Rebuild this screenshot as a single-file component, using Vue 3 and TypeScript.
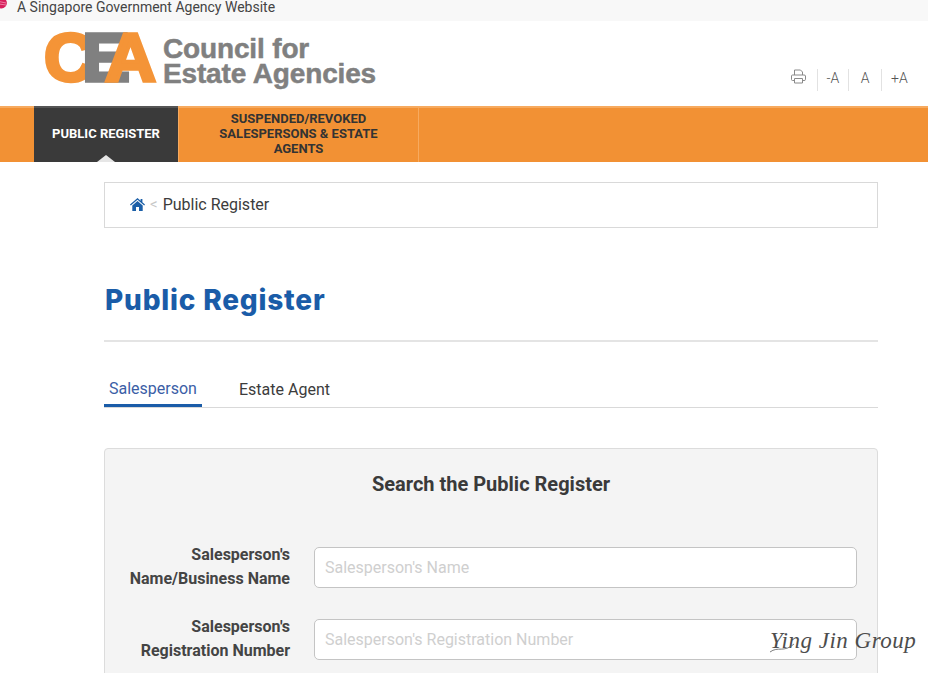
<script setup lang="ts">
const fields = [
  { lines: ["Salesperson's", 'Name/Business Name'], placeholder: "Salesperson's Name" },
  { lines: ["Salesperson's", 'Registration Number'], placeholder: "Salesperson's Registration Number" },
]
</script>

<template>
  <div class="page">
    <div class="gov">
      <svg class="lion" width="8" height="10" viewBox="0 0 8 10">
        <circle cx="1.5" cy="3" r="5.4" fill="#d81e5b" />
        <path d="M-1 1.5 L6 3 M-1 4 L6 5" stroke="#f7a3bd" stroke-width="0.7" />
      </svg>
      <span>A Singapore Government Agency Website</span>
    </div>

    <header class="head">
      <div class="logo">
        <svg class="mark" width="114" height="84" viewBox="0 -16 114 84">
          <text x="-1" y="51" class="mk mk-c" textLength="50" lengthAdjust="spacingAndGlyphs">C</text>
          <text x="37" y="51" class="mk mk-e" textLength="48" lengthAdjust="spacingAndGlyphs">E</text>
          <text x="60" y="51" class="mk mk-a" textLength="51" lengthAdjust="spacingAndGlyphs">A</text>
        </svg>
        <div class="logo-text">
          <div>Council for</div>
          <div>Estate Agencies</div>
        </div>
      </div>
      <div class="tools">
        <svg class="printer" width="15" height="15" viewBox="0 0 15 15" fill="none" stroke="#8a8a8a" stroke-width="1">
          <path d="M3.5 6 V1 H9.5 L11.5 3 V6" />
          <path d="M3.5 11.5 H1.5 Q.5 11.5 .5 10.5 V7 Q.5 6 1.5 6 H13 Q14.5 6 14.5 7 V10.5 Q14.5 11.5 13 11.5 H11.5" />
          <path d="M3.5 9.5 H11.5 V14 H3.5 Z" />
        </svg>
        <span class="size first">-A</span>
        <span class="size mid">A</span>
        <span class="size last">+A</span>
      </div>
    </header>

    <nav class="nav">
      <a class="item active">PUBLIC REGISTER</a>
      <a class="item second">SUSPENDED/REVOKED SALESPERSONS &amp; ESTATE AGENTS</a>
    </nav>

    <main class="main">
      <div class="crumb">
        <svg class="home" width="15" height="13" viewBox="0 0 15 13">
          <path fill="#1b5fa8" d="M7.5 0 L10.6 2.7 V1 H12.4 V4.3 L15 6.6 L14.2 7.5 L7.5 1.7 L.8 7.5 L0 6.6 Z M2.3 7.6 L7.5 3.1 L12.7 7.6 V13 H9 V9 H6 V13 H2.3 Z" />
        </svg>
        <span class="sep">&lt;</span>
        <span>Public Register</span>
      </div>

      <h1 class="title">Public Register</h1>

      <div class="tabs">
        <a class="tab on">Salesperson</a>
        <a class="tab">Estate Agent</a>
      </div>

      <section class="card">
        <h2 class="card-title">Search the Public Register</h2>
        <div v-for="f in fields" :key="f.placeholder" class="row">
          <label class="label">
            <span v-for="l in f.lines" :key="l">{{ l }}</span>
          </label>
          <input class="input" type="text" :placeholder="f.placeholder" />
        </div>
      </section>
    </main>

    <div class="mark-wm">
      <svg class="swash" width="150" height="34" viewBox="0 0 150 34" fill="none" stroke="#5a5a5a" stroke-width="0.8">
        <path d="M0 25 C8 19 14 26 24 17" />
      </svg>
      <span>Ying Jin Group</span>
    </div>
  </div>
</template>

<style>
html, body { margin: 0; overflow: hidden; background: #fff; }
</style>

<style scoped>
.page {
  position: relative;
  width: 928px;
  height: 673px;
  overflow: hidden;
  font-family: Roboto, "Liberation Sans", sans-serif;
  color: #3c3c3c;
}
.gov {
  height: 21px;
  background: #f8f8f8;
  display: flex;
  align-items: center;
  font-size: 14px;
  line-height: 15px;
  padding-left: 17px;
  position: relative;
  box-sizing: border-box;
  padding-bottom: 7px;
  color: #444;
}
.lion { position: absolute; left: 0; top: 0; }
.head {
  height: 85px;
  display: flex;
  justify-content: space-between;
  box-sizing: border-box;
  padding: 11px 20px 0 45px;
}
.logo { display: flex; align-items: flex-start; }
.mark { display: block; flex: none; margin: -18px 0 0; }
.mk { font-family: "Liberation Sans", sans-serif; font-weight: 700; font-size: 68px; stroke-width: 3.5px; }
.mk-c { fill: #f49437; stroke: #f49437; }
.mk-e { fill: #808080; stroke: #808080; }
.mk-a { fill: #f49437; stroke: #f49437; }
.logo-text {
  margin: 4px 0 0 4px;
  font-family: "Liberation Sans", sans-serif;
  font-weight: 700;
  font-size: 28px;
  line-height: 25px;
  letter-spacing: -0.15px;
  -webkit-text-stroke: 0.5px #808080;
  color: #808080;
}
.tools {
  display: flex;
  align-items: center;
  height: 22px;
  margin-top: 37px;
  font-size: 14px;
  font-weight: 300;
  color: #555;
}
.printer { margin-right: 11px; margin-top: -7px; }
.size { height: 22px; line-height: 18px; border-left: 1px solid #e2e2e2; box-sizing: border-box; text-align: center; }
.first { width: 31px; }
.mid { width: 33px; }
.last { width: 27px; padding-left: 9px; text-align: left; }
.nav {
  height: 56px;
  background: #f29134;
  border-top: 2px solid #f7aa5f;
  box-sizing: border-box;
  display: flex;
  padding-left: 34px;
  font-size: 13px;
  font-weight: 700;
  line-height: 15px;
  color: #333;
}
.item { display: flex; align-items: center; justify-content: center; text-align: center; box-sizing: border-box; padding-bottom: 4px; }
.active {
  width: 144px;
  background: #3a3a3a;
  color: #fff;
  position: relative;
  margin-top: -2px;
  border-top: 2px solid #555;
}
.active::after {
  content: "";
  position: absolute;
  left: 63px;
  bottom: 0;
  border-left: 9px solid transparent;
  border-right: 9px solid transparent;
  border-bottom: 7px solid #e6e6e6;
}
.second {
  width: 241px;
  padding: 0 30px 4px;
  border-left: 1px solid #f7aa5f;
  border-right: 1px solid #f7aa5f;
}
.main { padding: 20px 50px 0 104px; }
.crumb {
  height: 46px;
  border: 1px solid #d9d9d9;
  box-sizing: border-box;
  display: flex;
  align-items: center;
  padding: 0 0 2px 25px;
  font-size: 16px;
}
.sep { color: #c8c8c8; margin: 0 5px 0 5px; font-size: 15px; }
.title {
  margin: 0;
  height: 114px;
  box-sizing: border-box;
  padding: 55px 0 0 1px;
  border-bottom: 2px solid #e4e4e4;
  font-family: Inter, "Open Sans", sans-serif;
  font-size: 28px;
  line-height: 34px;
  font-weight: 800;
  letter-spacing: 0.8px;
  color: #1a5ca8;
}
.tabs {
  display: flex;
  height: 66px;
  border-bottom: 1px solid #d9d9d9;
  box-sizing: border-box;
  padding-top: 28px;
  font-size: 16px;
  line-height: 24px;
}
.tab { display: block; margin-left: 37px; padding-top: 8px; }
.tab.on {
  margin-left: 0;
  width: 98px;
  height: 37px;
  box-sizing: border-box;
  padding: 7px 5px 0;
  color: #3b5ea6;
  border-bottom: 3px solid #1a5ca8;
}
.card {
  margin-top: 40px;
  background: #f4f4f4;
  border: 1px solid #dcdcdc;
  border-radius: 4px;
  height: 300px;
  box-sizing: border-box;
  padding: 22px 20px 0 0;
}
.card-title {
  margin: 0 -20px 50px 0;
  font-size: 20px;
  line-height: 26px;
  font-weight: 700;
  text-align: center;
  color: #3a3a3a;
}
.row { display: flex; margin-bottom: 31px; height: 41px; }
.label {
  width: 185px;
  flex: none;
  display: flex;
  flex-direction: column;
  align-items: flex-end;
  font-size: 16px;
  font-weight: 700;
  line-height: 24px;
  margin-top: -4px;
  color: #444;
}
.input {
  margin-left: 24px;
  flex: 1;
  min-width: 0;
  height: 41px;
  box-sizing: border-box;
  border: 1px solid #c4c4c4;
  border-radius: 5px;
  background: #fff;
  padding: 0 10px;
  font-family: inherit;
  font-size: 16px;
  outline: none;
}
.input::placeholder { color: #cfcfcf; opacity: 1; }
.mark-wm {
  position: absolute;
  left: 770px;
  top: 627px;
  width: 150px;
  font-family: "Liberation Serif", serif;
  font-style: italic;
  font-size: 23px;
  line-height: 28px;
  letter-spacing: 0.5px;
  color: #4d4d4d;
  white-space: nowrap;
}
.swash { position: absolute; left: 0; top: 0; }
</style>
